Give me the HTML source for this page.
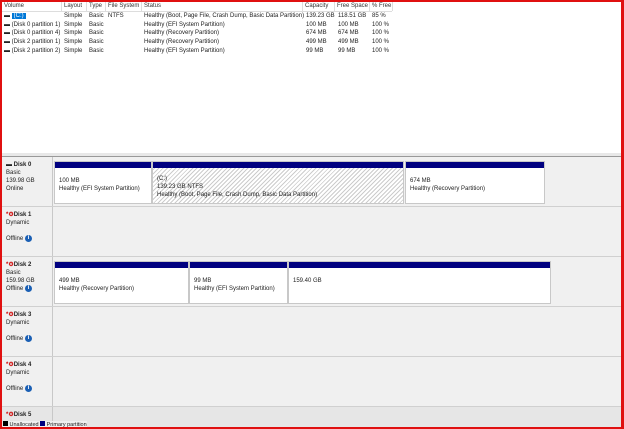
<!DOCTYPE html><html><head><style>
body{margin:0;width:624px;height:429px;overflow:hidden;font-family:"Liberation Sans",sans-serif;font-size:6px;color:#222;position:relative;background:#fff}
.a{position:absolute;white-space:nowrap}
.hd{position:absolute;top:2px;height:9px;line-height:9px;border-right:1px solid #ddd;padding-left:2px;box-sizing:border-box;color:#333;white-space:nowrap;overflow:hidden}
.row{position:absolute;left:2px;width:620px;background:#f0f0f0;border-bottom:1px solid #d0d0d0;box-sizing:border-box}
.lbl{position:absolute;left:0;top:0;bottom:0;width:51px;border-right:1px solid #c8c8c8;padding:4px 0 0 4px;line-height:8px;box-sizing:border-box}
.p{position:absolute;top:4px;height:43px;background:#fff;border:1px solid #c8c8c8;box-sizing:border-box}
.p:before{content:"";position:absolute;left:0;right:0;top:0;height:6px;background:#000080}
.p div{position:absolute;left:4px;top:15px;line-height:8px}
.i{display:inline-block;width:7px;height:7px;border-radius:50%;background:#1a5fb4;color:#fff;font-size:6px;text-align:center;line-height:7px;font-weight:bold;vertical-align:middle}
.o{color:#c00;font-weight:bold}
</style></head><body>
<div class="hd" style="left:2px;width:60px">Volume</div>
<div class="hd" style="left:62px;width:25px">Layout</div>
<div class="hd" style="left:87px;width:19px">Type</div>
<div class="hd" style="left:106px;width:36px">File System</div>
<div class="hd" style="left:142px;width:161px">Status</div>
<div class="hd" style="left:303px;width:32px">Capacity</div>
<div class="hd" style="left:335px;width:35px">Free Space</div>
<div class="hd" style="left:370px;width:23px">% Free</div>
<div style="position:absolute;left:2px;top:11px;width:390px;border-top:1px solid #ddd"></div>
<div class="a" style="left:4px;top:12px;line-height:8.7px">
▬ <span style="background:#0078d7;color:#fff;padding:0 2px">(C:)</span><br>▬ (Disk 0 partition 1)<br>▬ (Disk 0 partition 4)<br>▬ (Disk 2 partition 1)<br>▬ (Disk 2 partition 2)</div>
<div class="a" style="left:64px;top:12px;line-height:8.7px">Simple<br>Simple<br>Simple<br>Simple<br>Simple</div>
<div class="a" style="left:89px;top:12px;line-height:8.7px">Basic<br>Basic<br>Basic<br>Basic<br>Basic</div>
<div class="a" style="left:108px;top:12px;line-height:8.7px">NTFS</div>
<div class="a" style="left:144px;top:12px;line-height:8.7px">Healthy (Boot, Page File, Crash Dump, Basic Data Partition)<br>Healthy (EFI System Partition)<br>Healthy (Recovery Partition)<br>Healthy (Recovery Partition)<br>Healthy (EFI System Partition)</div>
<div class="a" style="left:306px;top:12px;line-height:8.7px">139.23 GB<br>100 MB<br>674 MB<br>499 MB<br>99 MB</div>
<div class="a" style="left:338px;top:12px;line-height:8.7px">118.51 GB<br>100 MB<br>674 MB<br>499 MB<br>99 MB</div>
<div class="a" style="left:372px;top:12px;line-height:8.7px">85 %<br>100 %<br>100 %<br>100 %<br>100 %</div>
<div style="position:absolute;left:2px;top:153px;width:620px;height:3px;background:#e8e8e8;border-bottom:1px solid #999"></div>
<div class="row" style="top:157px;height:50px"><div class="lbl"><b>▬ Disk 0</b><br>Basic<br>139.98 GB<br>Online</div>
<div class="p" style="left:52px;width:98px"><div>100 MB<br>Healthy (EFI System Partition)</div></div>
<div class="p" style="left:150px;width:252px;background:repeating-linear-gradient(135deg,#fff 0 2px,#ccc 2px 3px)"><div style="top:13px">(C:)<br>139.23 GB NTFS<br>Healthy (Boot, Page File, Crash Dump, Basic Data Partition)</div></div>
<div class="p" style="left:403px;width:140px"><div>674 MB<br>Healthy (Recovery Partition)</div></div></div>
<div class="row" style="top:207px;height:50px"><div class="lbl"><b><span class="o">*⚙</span>Disk 1</b><br>Dynamic<br><br>Offline <span class="i">i</span></div></div>
<div class="row" style="top:257px;height:50px"><div class="lbl"><b><span class="o">*⚙</span>Disk 2</b><br>Basic<br>159.98 GB<br>Offline <span class="i">i</span></div>
<div class="p" style="left:52px;width:135px"><div>499 MB<br>Healthy (Recovery Partition)</div></div>
<div class="p" style="left:187px;width:99px"><div>99 MB<br>Healthy (EFI System Partition)</div></div>
<div class="p" style="left:286px;width:263px"><div>159.40 GB</div></div></div>
<div class="row" style="top:307px;height:50px"><div class="lbl"><b><span class="o">*⚙</span>Disk 3</b><br>Dynamic<br><br>Offline <span class="i">i</span></div></div>
<div class="row" style="top:357px;height:50px"><div class="lbl"><b><span class="o">*⚙</span>Disk 4</b><br>Dynamic<br><br>Offline <span class="i">i</span></div></div>
<div class="row" style="top:407px;height:22px;background:#e6e6e6"><div class="lbl"><b><span class="o">*⚙</span>Disk 5</b></div></div>
<div class="a" style="left:3px;top:421px;background:#f0f0f0;line-height:6px;font-size:5.5px"><span style="display:inline-block;width:5px;height:5px;background:#000"></span> Unallocated <span style="display:inline-block;width:5px;height:5px;background:#000080"></span> Primary partition</div>
<div style="position:absolute;left:0;top:0;width:624px;height:429px;border:2px solid #e01010;border-right-width:3px;box-sizing:border-box"></div>
</body></html>
